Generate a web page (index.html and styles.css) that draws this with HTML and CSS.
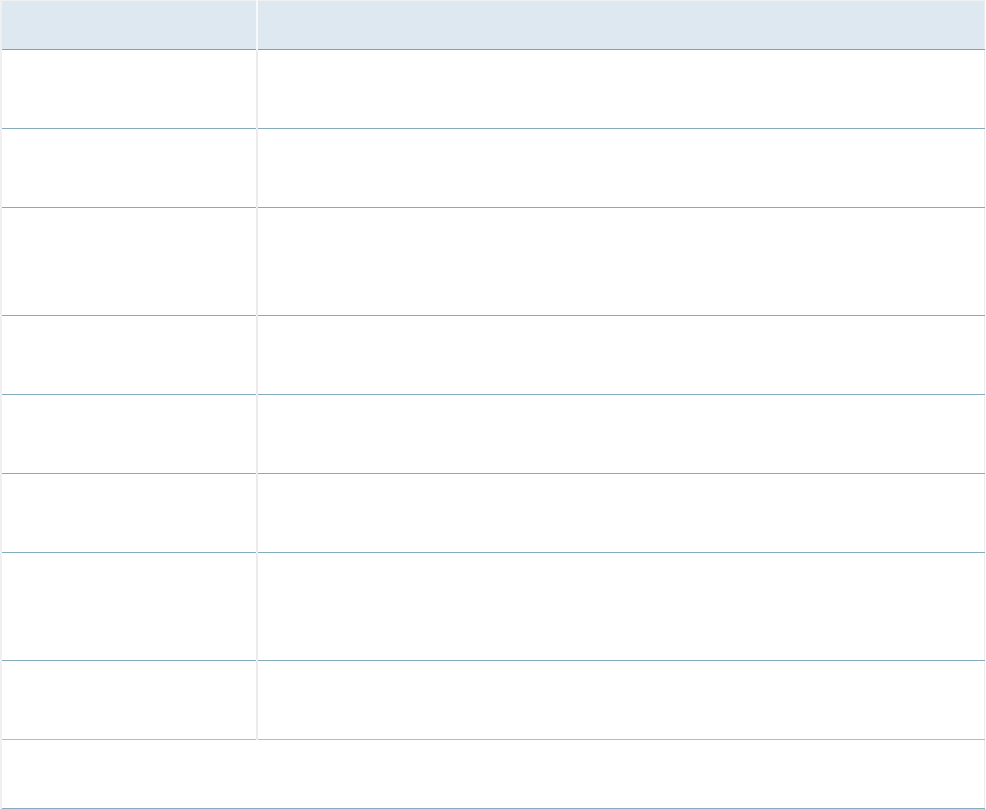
FILE: index.html
```html
<!DOCTYPE html>
<html lang="en">
  <head>
    <meta charset="UTF-8" />
    <meta name="viewport" content="width=device-width, initial-scale=1.0" />
    <title>Table</title>
    <link rel="stylesheet" href="styles.css">
  </head>
  <body>
    <table class="data-table">
      <thead>
        <tr>
          <th class="col-key"></th>
          <th class="col-value"></th>
        </tr>
      </thead>
      <tbody>
        <tr class="row"><td></td><td></td></tr>
        <tr class="row"><td></td><td></td></tr>
        <tr class="row row-tall"><td></td><td></td></tr>
        <tr class="row"><td></td><td></td></tr>
        <tr class="row"><td></td><td></td></tr>
        <tr class="row"><td></td><td></td></tr>
        <tr class="row row-tall"><td></td><td></td></tr>
        <tr class="row row-light"><td></td><td></td></tr>
        <tr class="row row-full"><td colspan="2"></td></tr>
      </tbody>
    </table>
  </body>
</html>
```

FILE: styles.css
```css
* {
  box-sizing: border-box;
}
html,
body {
  margin: 0;
  background: #ffffff;
}
body {
  font-family: "Open Sans", sans-serif;
  font-size: 14px;
  color: #333;
}
.data-table {
  width: 985px;
  border-collapse: collapse;
  table-layout: fixed;
  border-left: 2px solid #f0f0f0;
  border-right: 1px solid #ececec;
  border-top: 1px solid #f0f0f0;
}
.data-table th {
  height: 49px;
  background: #dee8f1;
  border-bottom: 1px solid #7fa3b4;
  padding: 0;
}
.col-key {
  width: 256px;
  border-right: 2px solid #f6f9fb;
}
.data-table td {
  height: 79px;
  padding: 0;
  border-bottom: 1px solid #86abbc;
}
.data-table td:first-child {
  border-right: 2px solid #ebebeb;
}
.row-tall td {
  height: 108px;
}
.row-light td {
  border-bottom-color: #a9c2ce;
}
.row-full td {
  height: 69px;
  border-right: none;
}
.row-full td:first-child {
  border-right: none;
}
```
